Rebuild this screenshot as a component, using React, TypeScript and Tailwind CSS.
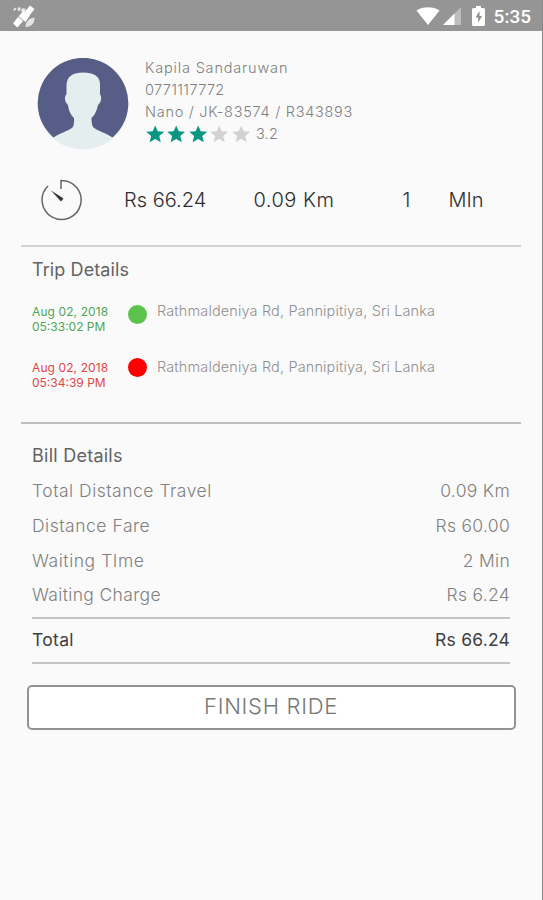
import { clsx } from "clsx";

const trips = [
  {
    date: "Aug 02, 2018",
    time: "05:33:02 PM",
    place: "Rathmaldeniya Rd, Pannipitiya, Sri Lanka",
    text: "text-[#4fa558]",
    dot: "bg-[#5bc24c] mt-px",
  },
  {
    date: "Aug 02, 2018",
    time: "05:34:39 PM",
    place: "Rathmaldeniya Rd, Pannipitiya, Sri Lanka",
    text: "text-[#e04848]",
    dot: "bg-[#ff0000] -mt-0.5",
  },
];

const bill = [
  { label: "Total Distance Travel", value: "0.09 Km", tracking: "tracking-[0.5px]" },
  { label: "Distance Fare", value: "Rs 60.00", tracking: "tracking-[0.52px]" },
  { label: "Waiting TIme", value: "2 Min", tracking: "tracking-[0.55px]" },
  { label: "Waiting Charge", value: "Rs 6.24", tracking: "tracking-[0.34px]" },
];

function StatusBar() {
  return (
    <header className="flex h-[31px] items-center justify-between bg-[#959595] pl-3 pr-[11px] text-white">
      <svg width="24" height="24" viewBox="0 0 24 24" fill="#fff" className="mt-0.5">
        <path d="M1 4.500 3.500 2.500 4.500 4 2.500 6zM5.500 2.500h3.500l-1 3.500H6zM10 3l4 1-2 4-3-2z" opacity=".75" />
        <path d="m18 .5 4.500 3.500-5 6.500-4.500-4z" />
        <path d="m11.500 5.500 6.500 5-4.500 6.500-7-5.500z" />
        <path d="m6 12 5 4L5.500 22.500l-4.500-4z" />
        <path d="M22.500 12.500c0 6-3 9.500-9 9.500 0-4 2.500-9 9-9.500z" opacity=".75" />
      </svg>
      <div className="flex items-center">
        <svg width="24" height="20" viewBox="0 0 24 20" fill="#fff">
          <path d="M.5 4.500C7 .2 17 .2 23.500 4.500L12 19z" />
        </svg>
        <svg width="19" height="18" viewBox="0 0 19 18" className="ml-[3px]">
          <path d="M0 18 18 0v18z" fill="#bdbdbd" />
          <path d="M0 18 11.500 6.500V18z" fill="#fff" />
        </svg>
        <svg width="13" height="20" viewBox="0 0 13 20" className="ml-2.5">
          <path d="M4 0h5v2h2.500Q13 2 13 3.500v15q0 1.500-1.500 1.500h-10Q0 20 0 18.500v-15Q0 2 1.500 2H4z" fill="#fff" />
          <path d="M7.500 5 3.500 11.500h2.700v5L10 10H7.500z" fill="#8e8e8e" />
        </svg>
        <span className="ml-[9px] mt-0.5 font-[Roboto] text-[19px] font-medium leading-5">5:35</span>
      </div>
    </header>
  );
}

function Avatar() {
  return (
    <svg width="92" height="92" viewBox="0 0 92 92" className="shrink-0">
      <circle cx="46" cy="46" r="45.500" fill="#e5eeee" />
      <path
        d="M16.500 79.500A45.300 45.300 0 1 1 75.500 79.500C69 75 61 73 56.500 69.500Q54.500 67.500 54.500 60C58 57 60 52 61 47C64.500 44 65 39 63 36V26C63 18 56 14.500 46.500 14.500C36 14.500 30 18 29.500 27V36C27 39 27.500 44 31 47C31.500 52 33.500 57 37 60Q37.500 67 35.500 69.500C31 73 23 75 16.500 79.500Z"
        fill="#565d86"
      />
    </svg>
  );
}

function Rating({ value }: { value: number }) {
  return (
    <div className="flex h-[22px] items-center gap-[3px] pl-px">
      {[0, 1, 2, 3, 4].map((i) => (
        <svg key={i} width="18.4" height="18.4" viewBox="0 0 24 24" fill={i < Math.floor(value) ? "#0b9682" : "#d2d2d2"}>
          <path d="m12 .5 3.300 7.700 8.400.7-6.400 5.500 2 8.200L12 18.300l-7.300 4.300 2-8.200L.3 8.900l8.400-.7z" />
        </svg>
      ))}
      <span className="ml-[3px] tracking-[0.2px]">{value}</span>
    </div>
  );
}

export default function App() {
  return (
    <div className="h-[900px] w-[543px] border-r border-[#888888] bg-[#fafafa] font-[Inter,sans-serif] font-light text-[#808080]">
      <StatusBar />

      {/* Driver */}
      <section className="flex h-[119px] pl-[37px] pt-[27px]">
        <Avatar />
        <div className="-mt-px ml-4 text-[14.5px] leading-[22px] whitespace-nowrap">
          <div className="tracking-[0.82px]">Kapila Sandaruwan</div>
          <div className="tracking-[0.35px]">0771117772</div>
          <div className="tracking-[0.72px]">Nano / JK-83574 / R343893</div>
          <Rating value={3.2} />
        </div>
      </section>

      {/* Trip summary */}
      <section className="flex h-[95px] items-center pt-[5px] pl-10 text-xl text-[#2e2e2e]">
        <svg width="42" height="42" viewBox="0 0 42 42" fill="none" stroke="#666" strokeWidth="1.500">
          <path d="M21 10V1.500A19.500 19.500 0 1 1 8 7" />
          <path d="m11 11.500 12.500 8-2.500 3z" fill="#333" stroke="none" />
        </svg>
        <span className="ml-[42px] w-[129.5px]">Rs 66.24</span>
        <span className="w-[149px] tracking-[0.500px]">0.09 Km</span>
        <span className="w-[46px]">1</span>
        <span>MIn</span>
      </section>

      {/* Trip details */}
      <section className="mx-[21px] h-[179px] border-y-2 border-t-[#d2d2d2] border-b-[#bfbfbf] px-[11px] pt-[11px]">
        <h2 className="text-lg leading-6 font-normal tracking-[0.1px] text-[#636363]">Trip Details</h2>
        <div className="mt-[22px] space-y-[26px]">
          {trips.map((trip) => (
            <div key={trip.time} className="flex h-[30px] whitespace-nowrap">
              <div className={clsx("w-[96px] text-xs leading-[15px] font-normal tracking-[0.1px]", trip.text)}>
                <div>{trip.date}</div>
                <div className="tracking-[0]">{trip.time}</div>
              </div>
              <span className={clsx("size-[19px] shrink-0 rounded-full", trip.dot)} />
              <span className="ml-2.5 text-[14.5px] leading-[13px] tracking-[0.14px] text-[#909090]">{trip.place}</span>
            </div>
          ))}
        </div>
      </section>

      {/* Bill */}
      <section className="mx-8 pt-[18px] text-[17.5px]">
        <h2 className="text-lg leading-[27px] font-normal tracking-[0.25px] text-[#636363]">Bill Details</h2>
        <div className="pt-[5px]">
          {bill.map((row) => (
            <div key={row.label} className="flex h-[34.7px] items-center justify-between">
              <span className={row.tracking}>{row.label}</span>
              <span className="tracking-[0.3px]">{row.value}</span>
            </div>
          ))}
        </div>
        <div className="mt-1 flex h-[47px] items-center justify-between border-y-2 border-[#c4c4c4] pb-px font-normal text-[#3f3f3f]">
          <span className="tracking-[0.3px]">Total</span>
          <span className="tracking-[0.2px]">Rs 66.24</span>
        </div>
      </section>

      <button className="mt-[21px] ml-[26.5px] block h-[45px] w-[489px] rounded-[5px] border-2 border-[#929292] bg-white pb-0.5 text-[22px] tracking-[0.7px] text-[#777]">
        FINISH RIDE
      </button>
    </div>
  );
}
